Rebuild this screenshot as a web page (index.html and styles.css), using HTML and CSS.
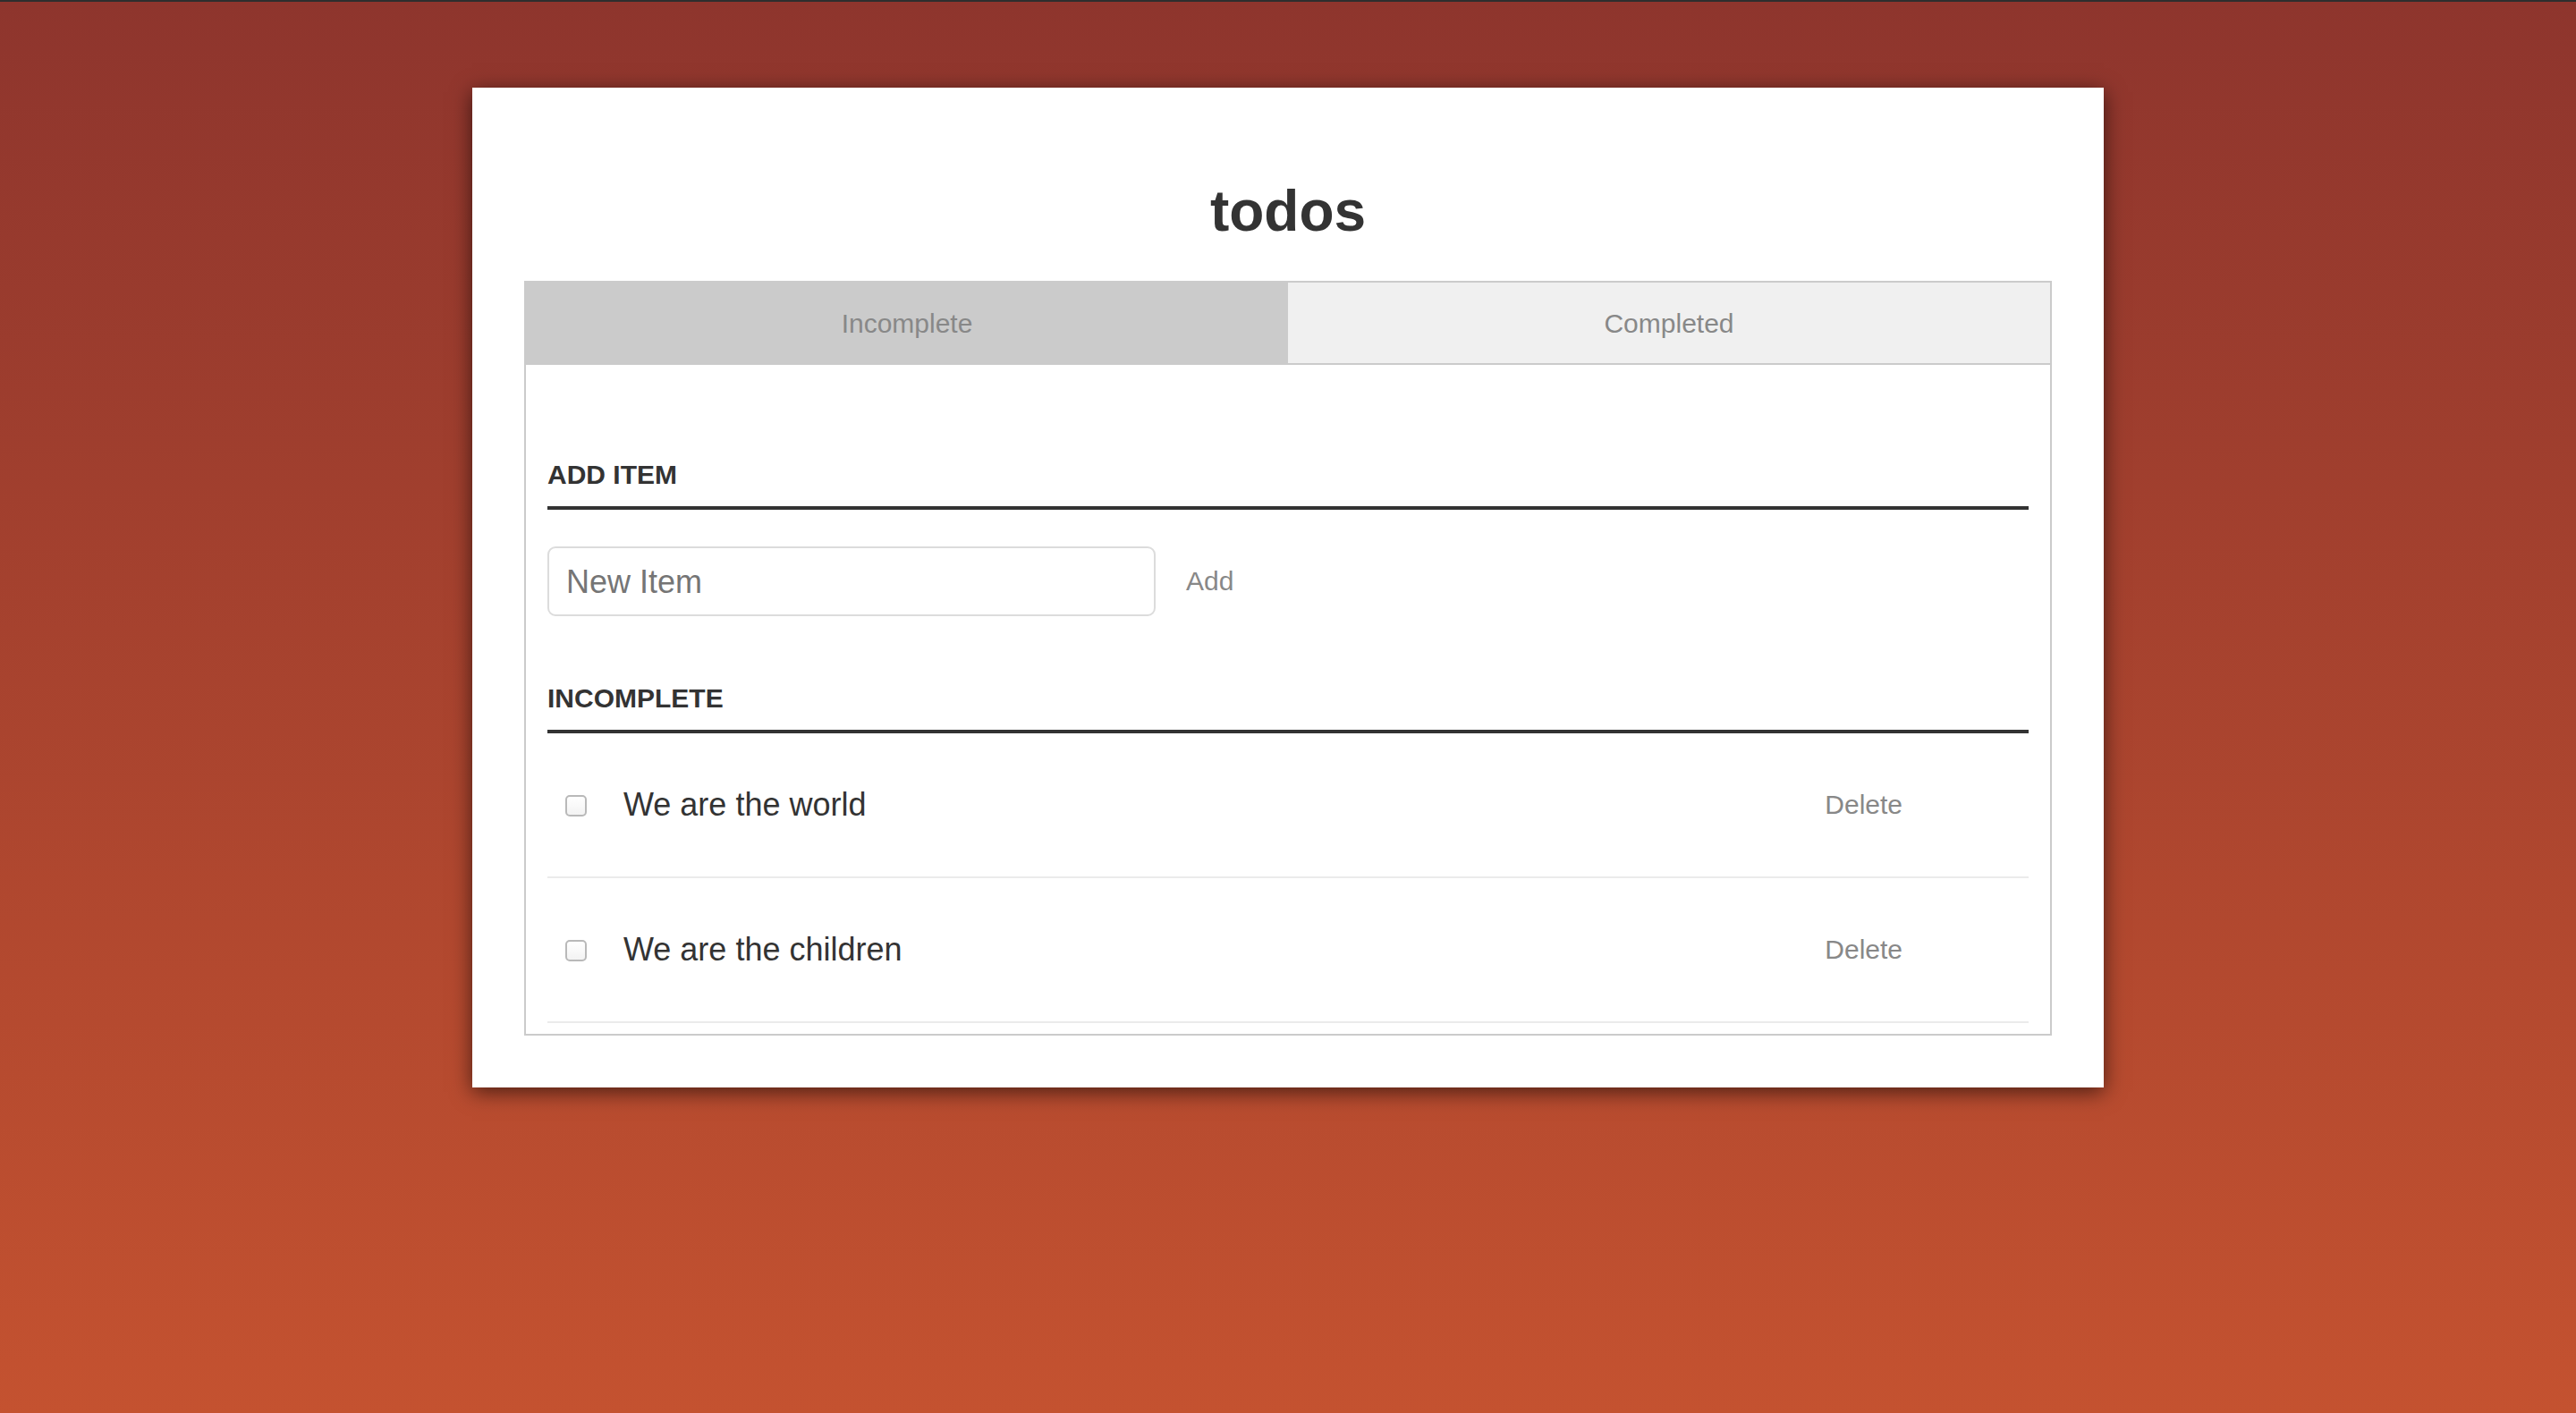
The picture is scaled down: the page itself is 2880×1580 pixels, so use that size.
FILE: index.html
```html
<!DOCTYPE html>
<html lang="en">
<head>
<meta charset="utf-8">
<title>todos</title>
<link rel="stylesheet" href="styles.css">
</head>
<body>
<div class="topbar"></div>
<main class="card">
  <h1 class="title">todos</h1>
  <section class="panel">
    <nav class="tabs">
      <button class="tab tab-active">Incomplete</button>
      <button class="tab">Completed</button>
    </nav>
    <div class="content">
      <h3 class="heading heading-first">ADD ITEM</h3>
      <div class="add-row">
        <input class="new-item" type="text" placeholder="New Item">
        <button class="link-btn add-btn">Add</button>
      </div>
      <h3 class="heading heading-second">INCOMPLETE</h3>
      <ul class="items">
        <li class="item">
          <input class="check" type="checkbox">
          <span class="item-text">We are the world</span>
          <button class="link-btn delete-btn">Delete</button>
        </li>
        <li class="item">
          <input class="check" type="checkbox">
          <span class="item-text">We are the children</span>
          <button class="link-btn delete-btn">Delete</button>
        </li>
      </ul>
    </div>
  </section>
</main>
</body>
</html>
```

FILE: styles.css
```css
* { box-sizing: border-box; }

html, body {
  margin: 0;
  padding: 0;
}

body {
  min-height: 1580px;
  background: linear-gradient(to bottom, #8e352d 0%, #c45230 100%);
  font-family: "Liberation Sans", Arial, Helvetica, sans-serif;
  color: #333;
}

.topbar {
  height: 2px;
  background: #2e2e2e;
}

.card {
  width: 1824px;
  margin: 96px auto 0;
  background: #fff;
  padding: 106px 58px 58px;
  box-shadow: 0 5px 22px rgba(0, 0, 0, 0.6);
}

.title {
  margin: 0 0 46px;
  font-size: 64px;
  line-height: 64px;
  font-weight: bold;
  text-align: center;
  color: #333;
}

.panel {
  border: 2px solid #cbcbcb;
}

.tabs {
  display: flex;
  border-bottom: 2px solid #cbcbcb;
}

.tab {
  flex: 1 1 0;
  height: 90px;
  border: 0;
  margin: 0;
  padding: 0;
  background: #f0f0f0;
  font-family: inherit;
  font-size: 30px;
  line-height: 92px;
  color: #888;
}

.tab-active {
  background: #cbcbcb;
}

.content {
  padding: 0 24px 12px;
}

.heading {
  margin: 0;
  font-size: 30px;
  line-height: 30px;
  font-weight: bold;
  color: #333;
  padding-bottom: 20px;
  border-bottom: 4px solid #333;
}

.heading-first { margin-top: 108px; }
.heading-second { margin-top: 77px; }

.add-row {
  display: flex;
  align-items: center;
  margin-top: 41px;
}

.new-item {
  width: 680px;
  height: 78px;
  border: 2px solid #dcdcdc;
  border-radius: 9px;
  padding: 2px 19px 0;
  font-family: inherit;
  font-size: 36px;
  color: #333;
  outline: none;
}

.new-item::placeholder {
  color: #757575;
}

.link-btn {
  border: 0;
  background: none;
  padding: 0;
  font-family: inherit;
  font-size: 30px;
  color: #888;
}

.add-btn {
  margin-left: 34px;
}

.items {
  list-style: none;
  margin: 0;
  padding: 0;
}

.item {
  display: flex;
  align-items: center;
  height: 162px;
  border-bottom: 2px solid #ebebeb;
  padding-left: 20px;
}

.check {
  appearance: none;
  -webkit-appearance: none;
  width: 24px;
  height: 24px;
  margin: 2px 0 0;
  border: 2px solid #b9b9b9;
  border-radius: 5px;
  background: linear-gradient(to bottom, #ffffff, #f3f3f3);
  flex: none;
}

.item-text {
  flex: 1 1 auto;
  margin-left: 41px;
  font-size: 36px;
  color: #333;
}

.delete-btn {
  margin-right: 141px;
}
```
